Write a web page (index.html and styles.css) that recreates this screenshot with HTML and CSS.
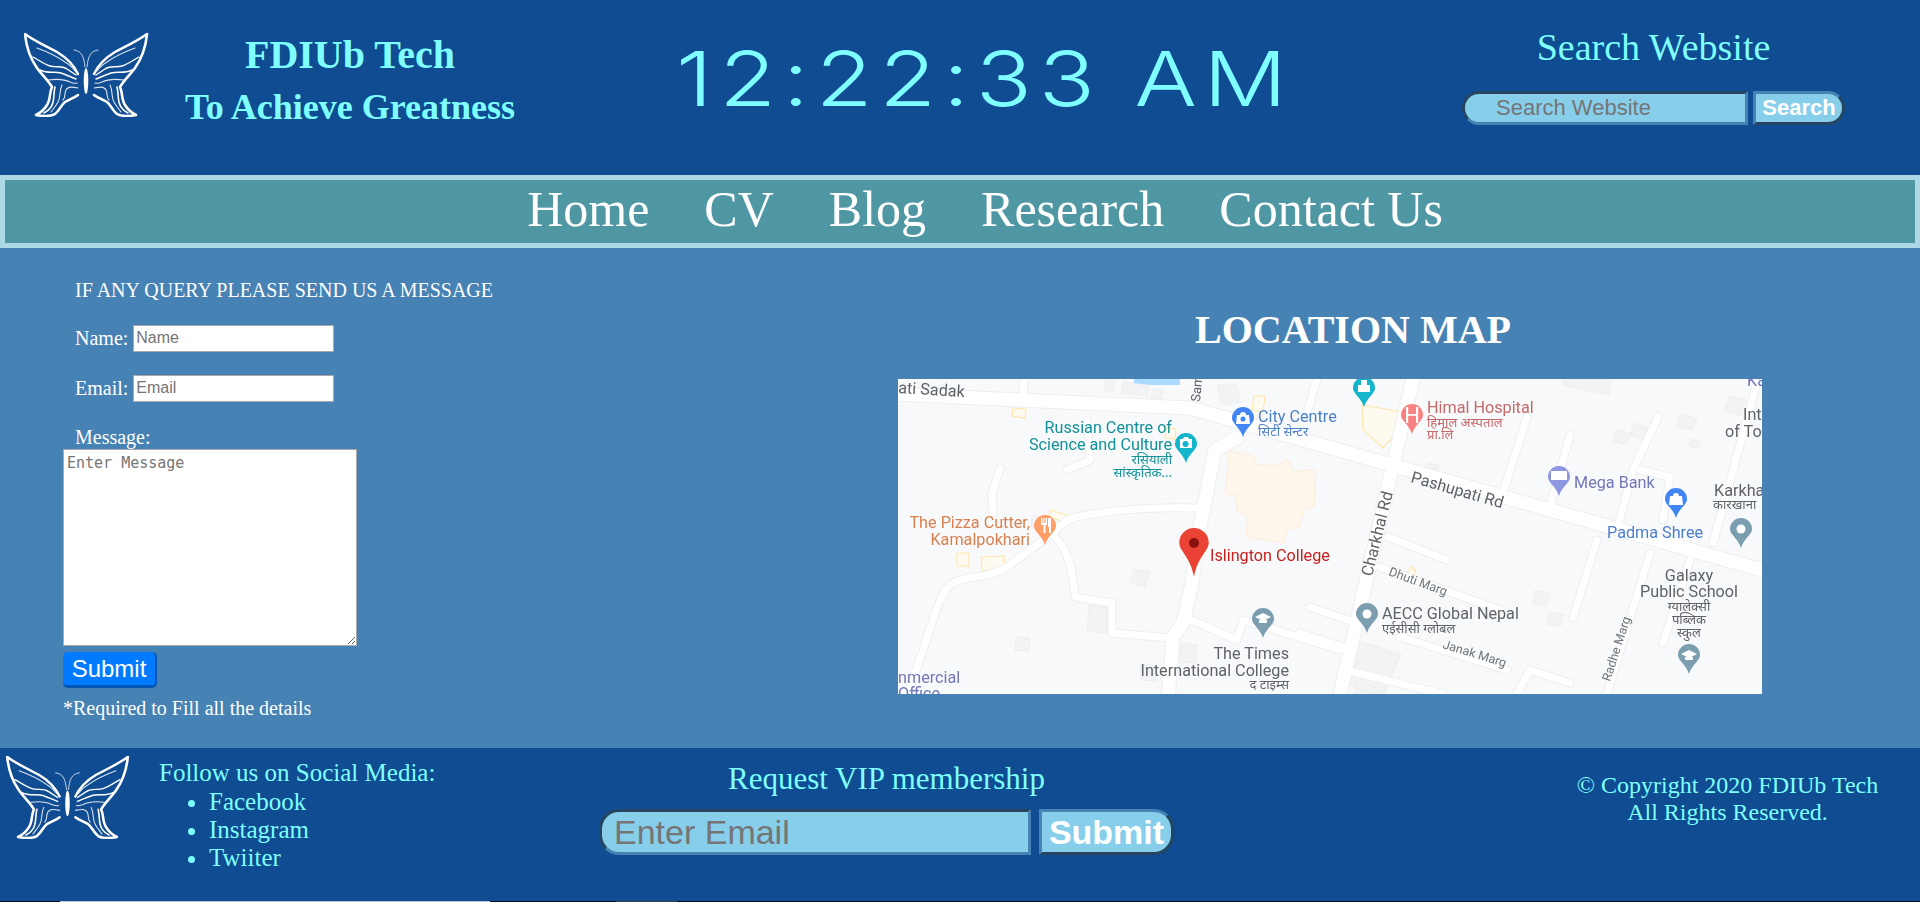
FILE: index.html
```html
<!DOCTYPE html>
<html lang="en">
<head>
<meta charset="utf-8">
<title>FDIUb Tech</title>
<link rel="stylesheet" href="styles.css">
</head>
<body>
<svg class="defs" width="0" height="0" aria-hidden="true">
  <symbol id="butterfly" viewBox="0 0 125 84">
    <g id="wing" fill="none" stroke="#fff" stroke-linecap="round" stroke-linejoin="round">
      <path stroke-width="2.4" d="M1 1C12 9 24 14 33 19C43 25 50 32 54 41"/>
      <path stroke-width="2.6" d="M1 1C2 12 6 25 13 35C18 42 24 47 28 54C25 60 27 66 23 72C20 77 16 80 12 82C18 83 26 84 31 81C36 77 37 72 41 69C46 66 50 65 54 62"/>
      <path stroke-width="1.1" opacity=".85" d="M13 15C24 19 34 24 41 29C46 32 49 35 51 38"/>
      <path stroke-width="1.4" d="M9 24C16 28 20 31 26 33C32 35 37 32 43 36C46 38 49 40 52 42"/>
      <path stroke-width="1.4" d="M16 37C24 41 30 38 37 40C43 42 47 44 52 46"/>
      <path stroke-width="1.1" opacity=".85" d="M24 47C31 46 40 46 46 49C49 50 51 51 53 50"/>
      <path stroke-width="1.6" d="M31 54C29 62 31 68 27 74C25 77 22 79 20 80"/>
      <path stroke-width="1.1" opacity=".85" d="M38 52C35 58 37 64 34 69C32 73 29 76 27 79"/>
      <path stroke-width="1.1" opacity=".85" d="M54 55C49 54 44 53 42 57C40 61 42 64 39 67"/>
      <path stroke-width="1" opacity=".75" d="M61 34C60 24 58 18 50 17"/>
    </g>
    <use href="#wing" transform="matrix(-1 0 0 1 124 0)"/>
    <ellipse cx="62" cy="48" rx="2.3" ry="13" fill="#fff"/>
  </symbol>
  <symbol id="pin" viewBox="0 0 22 30">
    <path d="M11 0a11 11 0 0 1 11 11c0 6-8 9-11 19C8 20 0 17 0 11A11 11 0 0 1 11 0z"/>
  </symbol>
</svg>

<header class="top">
  <svg class="logo"><use href="#butterfly"/></svg>
  <div class="brand">
    <h1>FDIUb Tech</h1>
    <h2>To Achieve Greatness</h2>
  </div>
  <div class="clock"><span>12:22:33 AM</span></div>
  <div class="search">
    <h3>Search Website</h3>
    <form class="search-row">
      <input class="pill-input" type="text" placeholder="Search Website">
      <button class="pill-button" type="button">Search</button>
    </form>
  </div>
</header>

<nav class="nav">
  <a href="#">Home</a>
  <a href="#">CV</a>
  <a href="#">Blog</a>
  <a href="#">Research</a>
  <a href="#">Contact Us</a>
</nav>

<main class="content">
  <form class="contact">
    <p class="contact-title">IF ANY QUERY PLEASE SEND US A MESSAGE</p>
    <label class="field">Name: <input type="text" placeholder="Name"></label>
    <label class="field field-email">Email: <input type="email" placeholder="Email"></label>
    <label class="field-label" for="msg">Message:</label>
    <textarea id="msg" placeholder="Enter Message"></textarea>
    <button class="send" type="button">Submit</button>
    <p class="note">*Required to Fill all the details</p>
  </form>

  <section class="location">
    <h2>LOCATION MAP</h2>
    <svg class="map" viewBox="0 0 864 315" width="864" height="315" role="img" aria-label="Map">
      <rect class="m-bg" width="864" height="315"/>
      <rect class="m-water" x="236" y="0" width="46" height="6"/>
      <g class="m-block">
        <path d="M207 1l10 1-1 11-10-1zM225 3l26 3-1 11-26-3zM255 9l11 3-3 9-10-2zM319 6l19-1 5 18-19 3zM191 226l20 3-2 25-20-2zM118 258l14 1-1 13-14-1zM236 190l16 3-5 15-15-4zM134 136l9 2-2 12-8-2zM283 264l16 2-1 18-16-1zM243 285l17 2-1 15-17-1zM530 84l11 2-2 11-10-1zM636 212l16 2-3 13-14-2zM652 233l14 3-4 12-13-3zM718 50l15 5-5 11-13-4zM736 44l16 5-6 12-14-5zM782 35l17 5-5 11-15-4zM793 60l10 3-4 6-8-2zM832 17l16 4-6 16-16-5zM455 260l48 15-18 44-46-18zM459 304l18 4-3 10-18-4zM665 0l48 0-2 16-46-10z"/>
      </g>
      <path class="m-peach" d="M331 72l24 5 4 8 20 2 8-6 6 3 1 8 24-1-2 36-11 5-3 15-13 4-2 13-22-3-17-3 2-21-11-5-1-15-11-2z"/>
      <path class="m-yfill" d="M464 26l40 7-5 21-14 15-20-18zM356 17l11 0-2 16-11-2zM115 29l13 1-1 9-13-2zM152 131l20 6-3 7-18-6zM59 174l12 0 0 13-12 0zM83 178l23-1 1 13-23 2zM268 48l10 2-1 10-10-1zM513 188l5 4-4 7-6-4z"/>
      <g class="m-casing">
        <path d="M-5 15L292 29L864 191"/><path d="M515 0L442 315"/>
        <path d="M339 59L317 71L302 148L294 204L285 244L275 258L270 320"/>
        <path class="thin" d="M302 129C270 128 225 128 179 138C165 141 155 154 155 154L109 188C90 200 70 196 55 204C40 212 35 248 12 308"/>
        <path class="thin" d="M157 158C170 170 175 191 177 218L214 224L214 254L272 259"/>
        <path class="thin" d="M102 89L94 115L95 134M169 91L192 81L189 41M289 239L339 261L345 241L442 271M419 0L409 34M126 0L125 15M412 228L459 244M629 38L605 114M672 56L652 128M760 38L735 91L719 151M742 91L772 98L765 141M859 4L815 164M699 161L675 239M752 174L709 315M792 181L765 264M490 158L549 181M482 188L602 231M402 254L445 268M502 258L609 291M672 304L632 291L619 315M455 293L545 315"/>
      </g>
      <g class="m-road">
        <path d="M-5 15L292 29L864 191"/><path d="M515 0L442 315"/>
        <path d="M339 59L317 71L302 148L294 204L285 244L275 258L270 320"/>
        <path class="thin" d="M302 129C270 128 225 128 179 138C165 141 155 154 155 154L109 188C90 200 70 196 55 204C40 212 35 248 12 308"/>
        <path class="thin" d="M157 158C170 170 175 191 177 218L214 224L214 254L272 259"/>
        <path class="thin" d="M102 89L94 115L95 134M169 91L192 81L189 41M289 239L339 261L345 241L442 271M419 0L409 34M126 0L125 15M412 228L459 244M629 38L605 114M672 56L652 128M760 38L735 91L719 151M742 91L772 98L765 141M859 4L815 164M699 161L675 239M752 174L709 315M792 181L765 264M490 158L549 181M482 188L602 231M402 254L445 268M502 258L609 291M672 304L632 291L619 315M455 293L545 315"/>
      </g>

      <use href="#pin" class="p-teal" x="277" y="54" width="22" height="30"/>
      <use href="#pin" class="p-blue" x="334" y="28" width="22" height="30"/>
      <use href="#pin" class="p-teal" x="455" y="-2" width="22" height="30"/>
      <use href="#pin" class="p-rose" x="503" y="25" width="22" height="30"/>
      <use href="#pin" class="p-orange" x="136" y="136" width="22" height="30"/>
      <use href="#pin" class="p-violet" x="650" y="87" width="22" height="30"/>
      <use href="#pin" class="p-blue" x="767" y="109" width="22" height="30"/>
      <use href="#pin" class="p-slate" x="832" y="139" width="22" height="30"/>
      <use href="#pin" class="p-slate" x="354" y="229" width="22" height="30"/>
      <use href="#pin" class="p-slate" x="458" y="224" width="22" height="30"/>
      <use href="#pin" class="p-slate" x="780" y="265" width="22" height="30"/>

      <g class="m-glyph">
        <circle cx="843" cy="150" r="4.5"/><circle cx="469" cy="235" r="4.5"/>
        <path d="M282 60h3l1-2h4l1 2h3v9h-12z"/>
        <path d="M339 36h12l1 9h-14zM342 36a3 3 0 0 1 6 0"/>
        <path d="M772 117h12l1 9h-14zM775 117a3 3 0 0 1 6 0"/>
        <path d="M460 6h12v7h-12zM463 1h6v5h-6z"/>
        <path d="M143 139h1.5v5h1v-5h1v5h1v-5h1.5v7h-1.5v8h-2v-8h-2.500zM150 139h3v15h-2v-6h-1z"/>
        <path d="M653 92h16v9h-16z"/>
        <path d="M357 238l8-4 8 4-8 4zM361 241h8v3h-8zM783 275l8-4 8 4-8 4zM787 278h8v3h-8z"/>
      </g>
      <circle class="m-dark" cx="287.500" cy="65" r="3"/>
      <circle class="m-dark2" cx="345" cy="40" r="2.500"/>

      <g class="m-text">
        <text class="c-grey tilt1" x="0" y="14">ati Sadak</text>
        <text class="c-grey tilt-sam" x="302" y="23">Sam</text>
        <text class="c-teal e" x="274" y="54">Russian Centre of</text>
        <text class="c-teal e" x="274" y="71">Science and Culture</text>
        <text class="c-teal e s" x="274" y="85">रसियाली</text>
        <text class="c-teal e s" x="274" y="98">सांस्कृतिक...</text>
        <text class="c-blue" x="360" y="43">City Centre</text>
        <text class="c-blue s" x="360" y="57">सिटी सेन्टर</text>
        <text class="c-rose" x="529" y="34">Himal Hospital</text>
        <text class="c-rose s" x="529" y="48">हिमाल अस्पताल</text>
        <text class="c-rose s" x="529" y="60">प्रा.लि</text>
        <text class="c-grey" x="845" y="41">Int</text>
        <text class="c-grey" x="827" y="58">of To</text>
        <text class="c-violet" x="849" y="7">Ka</text>
        <text class="c-grey r tilt-pash" x="512" y="103">Pashupati Rd</text>
        <text class="c-grey tilt-chark" x="474" y="198">Charkhal Rd</text>
        <text class="c-violet" x="676" y="109">Mega Bank</text>
        <text class="c-blue" x="709" y="159">Padma Shree</text>
        <text class="c-grey" x="816" y="117">Karkha</text>
        <text class="c-grey s" x="815" y="130">कारखाना</text>
        <text class="c-grey m" x="791" y="202">Galaxy</text>
        <text class="c-grey m" x="791" y="218">Public School</text>
        <text class="c-grey m s" x="791" y="232">ग्यालेक्सी</text>
        <text class="c-grey m s" x="791" y="245">पब्लिक</text>
        <text class="c-grey m s" x="791" y="258">स्कुल</text>
        <text class="c-grey" x="484" y="240">AECC Global Nepal</text>
        <text class="c-grey s" x="484" y="254">एईसीसी ग्लोबल</text>
        <text class="c-lite t tilt-dhuti" x="490" y="196">Dhuti Marg</text>
        <text class="c-lite t tilt-janak" x="544" y="269">Janak Marg</text>
        <text class="c-lite t tilt-radhe" x="712" y="303">Radhe Marg</text>
        <text class="c-orange e" x="132" y="149">The Pizza Cutter,</text>
        <text class="c-orange e" x="132" y="166">Kamalpokhari</text>
        <text class="c-grey e" x="391" y="280">The Times</text>
        <text class="c-grey e" x="391" y="297">International College</text>
        <text class="c-grey e s" x="391" y="310">द टाइम्स</text>
        <text class="c-violet" x="0" y="304">nmercial</text>
        <text class="c-violet" x="0" y="320">Office</text>
      </g>

      <text class="himal-h" x="514" y="44">H</text>

      <path class="p-red" d="M296 149a14.700 14.700 0 0 1 14.700 14.700c0 8-11 14-14.700 34c-3.700-20-14.700-26-14.700-34A14.700 14.700 0 0 1 296 149z"/>
      <circle class="m-core" cx="296" cy="164" r="5"/>
      <text class="c-red" x="312" y="182">Islington College</text>
    </svg>
  </section>
</main>

<footer class="bottom">
  <svg class="logo logo-foot"><use href="#butterfly"/></svg>
  <div class="social">
    <p>Follow us on Social Media:</p>
    <ul>
      <li>Facebook</li>
      <li>Instagram</li>
      <li>Twiiter</li>
    </ul>
  </div>
  <div class="vip">
    <h3>Request VIP membership</h3>
    <form class="vip-row">
      <input class="pill-input big" type="email" placeholder="Enter Email">
      <button class="pill-button big" type="button">Submit</button>
    </form>
  </div>
  <div class="copyright">© Copyright 2020 FDIUb Tech<br>All Rights Reserved.</div>
</footer>
<div class="edge"><span class="edge-a"></span><span class="edge-b"></span></div>
</body>
</html>
```

FILE: styles.css
```css
* { box-sizing: border-box; }
html, body { margin: 0; padding: 0; height: 902px; overflow: hidden; }
body { background: #000814; font-family: "Liberation Serif", "Times New Roman", serif; color: #fff; }
.defs { display: block; height: 0; }
h1, h2, h3, p, ul { margin: 0; padding: 0; font-weight: normal; }

/* header */
.top { height: 175px; background: #0f4c92; display: flex; align-items: flex-start; color: #7fffff; }
.logo { display: block; width: 125px; height: 84px; margin: 33px 0 0 24px; flex: none; filter: blur(.3px); }
.brand { width: 372px; margin-left: 15px; padding-top: 31px; text-align: center; line-height: 1; font-weight: bold; flex: none; }
.brand h1 { font-size: 40px; font-weight: bold; line-height: 47px; }
.brand h2 { font-size: 36px; font-weight: bold; line-height: 47px; margin-top: 6px; }
.clock { flex: none; width: 640px; margin-left: 140px; padding-top: 35px; font: 300 76px/86px Inter, sans-serif; letter-spacing: 5.5px; white-space: nowrap; }
.clock span { display: inline-block; transform: scaleX(1.22); transform-origin: 0 50%; }
.search { flex: none; margin-left: 146px; width: 383px; padding-top: 25px; text-align: center; }
.search h3 { font-size: 38px; line-height: 44px; }
.search-row { display: flex; margin-top: 22px; gap: 5px; }

.pill-input { width: 286px; height: 34px; padding: 0 0 0 31px; background: #87ceeb; border: 3px inset #4682b4; border-radius: 20px 0 0 20px; font: 22px "Liberation Sans", Arial, sans-serif; outline: none; }
.pill-input::placeholder { color: #757575; opacity: 1; }
.pill-button { width: 92px; height: 34px; padding: 0; background: #87ceeb; border: 3px outset #4682b4; border-radius: 0 20px 20px 0; color: #fff; font: bold 22px "Liberation Sans", Arial, sans-serif; }

/* nav */
.nav { height: 73px; background: #5097a4; border: 5px solid #add8e6; display: flex; justify-content: center; gap: 55px; padding-left: 50px; font-size: 50px; line-height: 58px; }
.nav a { color: #fff; text-decoration: none; }

/* main */
.content { height: 500px; background: #4682b4; display: flex; align-items: flex-start; }
.contact { width: 898px; flex: none; padding: 31px 0 0 63px; display: flex; flex-direction: column; align-items: flex-start; font-size: 20px; }
.contact-title { line-height: 23px; padding-left: 12px; }
.field { display: flex; align-items: center; gap: 5px; padding-left: 12px; height: 28px; margin-top: 22px; }
.field-email { margin-top: 22px; }
.field input { width: 201px; height: 27px; padding: 0 2px; border: 1px solid #a9a9a9; background: #fff; font: 16px "Liberation Sans", Arial, sans-serif; }
.field input::placeholder { color: #757575; opacity: 1; }
.field-label { padding-left: 12px; line-height: 23px; margin-top: 24px; }
textarea { display: block; width: 294px; height: 197px; margin: 0; padding: 4px 3px; border: 1px solid #a9a9a9; background: #fff; font: 15px/18px "DejaVu Sans Mono", monospace; }
textarea::placeholder { color: #757575; opacity: 1; }
.send { width: 94px; height: 36px; margin-top: 6px; padding: 0; background: #007bff; border: 0; border-right: 2px solid #0056b3; border-bottom: 3px solid #0056b3; border-radius: 5px; color: #fff; font: 24px "Liberation Sans", Arial, sans-serif; }
.note { margin-top: 9px; line-height: 23px; }

.location { width: 864px; flex: none; text-align: center; }
.location h2 { font-size: 40px; font-weight: bold; line-height: 46px; margin: 59px 0 26px 46px; }
.map { display: block; filter: blur(.35px); }

/* map parts */
.m-bg { fill: #f8f9fa; }
.m-water { fill: #aadaff; }
.m-block { fill: #f1f3f4; stroke: #e8eaed; stroke-width: .6; }
.m-peach { fill: #fff6ec; stroke: #fdeedd; stroke-width: 1; }
.m-yfill { fill: #fffaf0; stroke: #fde7ad; stroke-width: 1.2; }
.m-casing, .m-road { fill: none; stroke-linecap: round; stroke-linejoin: round; }
.m-casing { stroke: #eceef0; stroke-width: 15; }
.m-road { stroke: #fff; stroke-width: 13; }
.m-casing .thin { stroke-width: 9; }
.m-road .thin { stroke-width: 7; }
.p-teal { fill: #12b5cb; }
.p-blue { fill: #4285f4; }
.p-rose { fill: #f88181; }
.p-orange { fill: #ff9e67; }
.p-violet { fill: #8e97e0; }
.p-slate { fill: #7b9eb0; }
.p-red { fill: #ea4335; }
.m-core { fill: #8a1010; }
.m-glyph { fill: #fff; }
.m-dark { fill: #12b5cb; }
.m-dark2 { fill: #4285f4; }
.m-text text, .c-red { font-family: Roboto, "Noto Sans", sans-serif; font-size: 16.2px; }
.m-text .s { font-size: 13px; font-family: "Noto Sans", "DejaVu Sans", sans-serif; }
.m-text .t { font-size: 12.5px; }
.m-text .e { text-anchor: end; }
.m-text .m { text-anchor: middle; }
.c-grey { fill: #5f6368; }
.c-lite { fill: #70757a; }
.c-teal { fill: #129297; }
.c-blue { fill: #4a7fc9; }
.c-rose { fill: #c5696a; }
.c-orange { fill: #d9804f; }
.c-violet { fill: #7378b8; }
.c-red { fill: #c5221f; }
.himal-h { fill: #fff; font-family: Roboto, sans-serif; font-size: 22px; text-anchor: middle; }
.tilt1 { transform: rotate(3.5deg); transform-origin: 0 14px; }
.m-text .tilt-sam { transform: rotate(-85deg); transform-origin: 302px 23px; font-size: 13px; }
.tilt-pash { transform: rotate(16deg); transform-origin: 512px 103px; }
.tilt-chark { transform: rotate(-76deg); transform-origin: 474px 198px; }
.tilt-dhuti { transform: rotate(20deg); transform-origin: 490px 196px; }
.tilt-janak { transform: rotate(17deg); transform-origin: 544px 269px; }
.tilt-radhe { transform: rotate(-72deg); transform-origin: 712px 303px; }

/* footer */
.bottom { height: 153px; background: #0f4c92; display: flex; align-items: flex-start; color: #7fffff; }
.logo-foot { margin: 8px 0 0 6px; width: 124px; height: 83px; }
.social { width: 441px; flex: none; padding: 11px 0 0 29px; font-size: 25px; line-height: 28px; }
.social ul { margin-top: 1px; padding-left: 50px; list-style: disc; }
.vip { width: 575px; margin-left: 28px; flex: none; padding-top: 13px; text-align: center; }
.vip h3 { font-size: 31px; line-height: 36px; }
.vip-row { display: flex; gap: 8px; margin-top: 12px; }
.pill-input.big { width: 432px; height: 46px; padding-left: 12px; font-size: 34px; }
.pill-button.big { width: 136px; height: 46px; font-size: 34px; }
.copyright { flex: 1; padding: 24px 0 0 361px; font-size: 24px; line-height: 27px; text-align: center; }

.edge { height: 1px; display: flex; }
.edge-a { display: block; width: 430px; margin-left: 60px; background: #b6c4d6; }
.edge-b { display: block; width: 61px; margin-left: 126px; background: #3a3f48; }
```
